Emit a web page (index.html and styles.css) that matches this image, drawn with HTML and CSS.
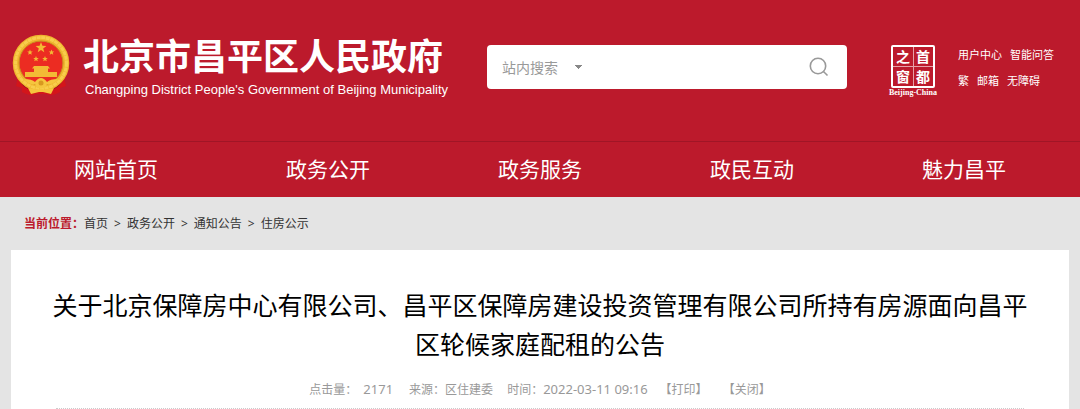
FILE: index.html
```html
<!DOCTYPE html>
<html lang="zh-CN">
<head>
<meta charset="utf-8">
<meta name="viewport" content="width=device-width, initial-scale=1">
<title>北京市昌平区人民政府</title>
<link rel="stylesheet" href="styles.css">
</head>
<body>
<header class="site-header">
  <div class="masthead">
    <a class="brand" href="#">
      <svg class="emblem" viewBox="0 0 58 62" aria-hidden="true">
        <path d="M6 42 4 52 10 54 10 58Q18 63 24 60H34Q40 63 48 58L48 54 54 52 52 42Z" fill="#d3151b"/>
        <path d="M9 48q5 7 12 7M49 48q-5 7-12 7" fill="none" stroke="#8f1018" stroke-width="1.4"/>
        <circle cx="29" cy="29" r="25" fill="#ec2c22" stroke="#efb62f" stroke-width="6.500"/>
        <circle cx="29" cy="29" r="25.5" fill="none" stroke="#f8cd4c" stroke-width="3" stroke-dasharray="4 .6"/>
        <circle cx="29" cy="29" r="22" fill="none" stroke="#c98b20" stroke-width="1"/>
        <path d="M29 8l1.4 3.8 4 .1-3.200 2.500 1.100 3.900-3.300-2.200-3.300 2.200 1.100-3.900-3.200-2.500 4-.1Z" fill="#f3bb35"/>
        <g fill="#f3bb35">
          <path d="M18 15.500l.8 1.900 2 .1-1.600 1.300.6 2-1.800-1.100-1.800 1.100.6-2-1.600-1.300 2-.1Z"/>
          <path d="M39.500 15.500l.8 1.900 2 .1-1.600 1.300.6 2-1.800-1.100-1.800 1.100.6-2-1.600-1.300 2-.1Z"/>
          <path d="M24 22l.8 1.900 2 .1-1.600 1.300.6 2-1.800-1.100-1.800 1.100.6-2-1.600-1.300 2-.1Z"/>
          <path d="M33 22l.8 1.900 2 .1-1.600 1.300.6 2-1.800-1.100-1.800 1.100.6-2-1.600-1.300 2-.1Z"/>
          <path d="M22 32h14l2 2.500H20ZM22 34h14v4H22ZM13 38h32v5H13Z"/>
        </g>
        <path d="M12 45q8 0 11 3 3-4 6-4t6 4q3-3 11-3-4 6-11 5l-2 4h-8l-2-4q-7 1-11-5Z" fill="#f5c53e"/>
        <path d="m16 54 10 2q3-3 6 0l10-2-3 6-8-2h-4l-8 2Z" fill="#f5c53e"/>
        <circle cx="29" cy="49" r="2.500" fill="#d8981f"/>
      </svg>
      <span class="brand-text">
        <span class="brand-name">北京市昌平区人民政府</span>
        <span class="brand-en" lang="en">Changping District People's Government of Beijing Municipality</span>
      </span>
    </a>
    <form class="search" role="search">
      <select class="search-scope" aria-label="搜索范围">
        <option>站内搜索</option>
      </select>
      <input class="search-input" type="text" aria-label="搜索">
      <button class="search-button" type="button" aria-label="提交搜索">
        <svg viewBox="0 0 20 20" width="20" height="20" aria-hidden="true">
          <circle cx="9" cy="9" r="7.700"/><path d="M14.200 14.200 18.500 18.500"/>
        </svg>
      </button>
    </form>
    <a class="capital" href="#">
      <span class="capital-seal"><span>之</span><span>首</span><span>窗</span><span>都</span></span>
      <span class="capital-en" lang="en">Beijing-China</span>
    </a>
    <div class="tools">
      <div class="tool-row"><a href="#">用户中心</a><a href="#">智能问答</a></div>
      <div class="tool-row"><a href="#">繁</a><a href="#">邮箱</a><a href="#">无障碍</a></div>
    </div>
  </div>
  <nav class="main-nav">
    <a href="#">网站首页</a>
    <a href="#">政务公开</a>
    <a href="#">政务服务</a>
    <a href="#">政民互动</a>
    <a href="#">魅力昌平</a>
  </nav>
</header>
<nav class="breadcrumb" aria-label="当前位置">
  <strong>当前位置：</strong>
  <a href="#">首页</a><span class="sep">&gt;</span>
  <a href="#">政务公开</a><span class="sep">&gt;</span>
  <a href="#">通知公告</a><span class="sep">&gt;</span>
  <a href="#">住房公示</a>
</nav>
<main class="article">
  <h1>关于北京保障房中心有限公司、昌平区保障房建设投资管理有限公司所持有房源面向昌平区轮候家庭配租的公告</h1>
  <div class="meta">
    <span class="hits">点击量：<span class="num">2171</span></span>
    <span class="source">来源：区住建委</span>
    <span class="time">时间：<time class="num">2022-03-11 09:16</time></span>
    <button class="action" type="button">【打印】</button>
    <button class="action" type="button">【关闭】</button>
  </div>
</main>
</body>
</html>
```
FILE: styles.css
```css
* {
  box-sizing: border-box;
}

body {
  margin: 0;
  background: #e4e4e4;
  color: #333;
  font-family: "Noto Sans", "Noto Sans CJK SC", sans-serif;
  font-size: 12px;
}

a {
  color: inherit;
  text-decoration: none;
}

button,
input,
select {
  border: 0;
  padding: 0;
  background: none;
  color: inherit;
  font: inherit;
}

.site-header {
  background: #bc1a2c;
  color: #fff;
}

.masthead {
  display: flex;
  align-items: flex-start;
  padding: 34px 26px 0 12px;
  height: 141px;
}

.brand {
  display: flex;
  gap: 13px;
  white-space: nowrap;
}

.emblem {
  width: 58px;
  height: 62px;
}

.brand-text {
  display: flex;
  flex-direction: column;
}

.brand-name {
  font-family: "Noto Sans CJK SC", sans-serif;
  font-size: 36px;
  font-weight: 700;
  line-height: 40px;
}

.brand-en {
  padding: 6px 0 0 2px;
  font-family: "Liberation Sans", Arial, sans-serif;
  font-size: 13px;
  line-height: 20px;
}

.search {
  display: flex;
  flex: 0 1 360px;
  height: 44px;
  margin: 11px 0 0 auto;
  padding: 0 18px 0 15px;
  border-radius: 4px;
  background: #fff;
  color: #999;
  font-size: 14px;
}

.search-scope {
  appearance: none;
  width: 80px;
  background: conic-gradient(from 315deg at 50% 100%, #888 90deg, transparent 0) 73px 20px / 7px 4px no-repeat;
}

.search-input {
  flex: 1;
  min-width: 0;
}

.search-button {
  display: flex;
  align-items: center;
}

.search-button svg {
  fill: none;
  stroke: #999;
  stroke-width: 1.6;
}

.capital {
  display: flex;
  flex-direction: column;
  align-items: center;
  width: 50px;
  margin: 11px 20px 0 41px;
}

.capital-seal {
  display: grid;
  grid-template-columns: 1fr 1fr;
  width: 44px;
  height: 43px;
  border: 2px solid #fff;
  border-radius: 2px;
  background: linear-gradient(#e6a0a8, #e6a0a8) 50% 0 / 1px 100% no-repeat,
    linear-gradient(#e6a0a8, #e6a0a8) 0 50% / 100% 1px no-repeat;
  font-family: "Noto Sans CJK SC", sans-serif;
  font-size: 14px;
  font-weight: 700;
  line-height: 19px;
  text-align: center;
}

.capital-en {
  font-family: "Liberation Serif", serif;
  font-size: 8px;
  font-weight: 700;
  line-height: 9px;
}

.tools {
  display: flex;
  flex-direction: column;
  gap: 10px;
  margin-top: 13px;
  font-size: 11px;
  line-height: 16px;
  white-space: nowrap;
}

.tool-row {
  display: flex;
  gap: 8px;
}

.main-nav {
  display: grid;
  grid-template-columns: repeat(5, 1fr);
  padding: 0 10px;
  border-top: 1px solid #a01526;
  font-size: 21px;
  line-height: 55px;
  text-align: center;
}

.breadcrumb {
  display: flex;
  padding: 17px 24px;
  line-height: 19px;
}

.breadcrumb strong {
  color: #bc1a2c;
}

.sep {
  margin: 0 6px;
}

.article {
  min-height: 170px;
  margin: 0 11px;
  padding: 36px 45px 0;
  background: #fff;
}

.article h1 {
  margin: 0 -10px;
  color: #000;
  font-size: 25px;
  font-weight: 400;
  line-height: 39px;
  text-align: center;
  word-break: break-all;
}

.meta {
  display: flex;
  align-items: center;
  justify-content: center;
  height: 45px;
  padding-top: 7px;
  border-bottom: 1px dotted #ccc;
  color: #999;
  line-height: 20px;
}

.num {
  font-size: 13px;
}

.hits .num {
  margin-left: 6px;
}

.source {
  margin-left: 16px;
}

.time {
  margin: 0 12px 0 14px;
}

.action + .action {
  margin-left: 15px;
}
```
